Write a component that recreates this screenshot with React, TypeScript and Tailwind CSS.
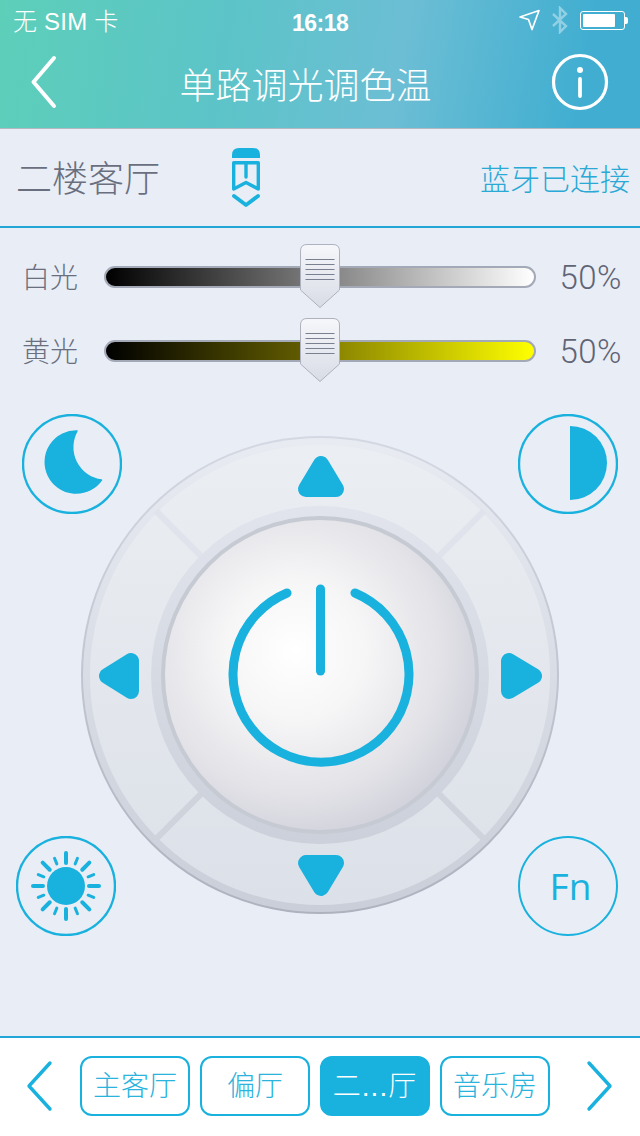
const BLUE = '#19b1de';

function StatusBar() {
  return (
    <div className="relative flex h-10 items-center pl-[13px] pr-[12px] text-[24px] text-white">
      <span className="pt-[4px] font-light tracking-[0.2px]">无 SIM 卡</span>
      <span className="absolute left-[292px] top-[6px] text-[23px] font-bold tracking-[-0.5px]">16:18</span>
      <div className="ml-auto flex items-center">
        <svg width="22" height="22" viewBox="0 0 22 22" fill="none" stroke="white" strokeWidth="1.7" strokeLinejoin="round">
          <path d="M1 8 L20 1.5 L13 20.5 L9.5 10.5 Z" />
        </svg>
        <svg className="ml-[11px] opacity-40" width="16" height="28" viewBox="0 0 16 28" fill="none" stroke="white" strokeWidth="2.4">
          <path d="M1 8 L14 20 L8 26 V2 L14 8 L1 20" />
        </svg>
        <div className="ml-[12px] flex items-center">
          <div className="h-[19px] w-[45px] rounded-[3px] border border-white p-[2px]">
            <div className="h-full w-[32px] rounded-[1px] bg-white" />
          </div>
          <div className="h-[7px] w-[3px] rounded-r-[2px] bg-white" />
        </div>
      </div>
    </div>
  );
}

function Header() {
  return (
    <header className="h-[129px] shrink-0 border-b border-[#b4b8c0] bg-[linear-gradient(100deg,#5dcfb9_0%,#5cc4c8_35%,#6cbed4_62%,#41aed1_90%)]">
      <StatusBar />
      <div className="relative flex h-[88px] items-center justify-center">
        <svg className="absolute left-[28px] top-[14px]" width="32" height="56" viewBox="0 0 32 56" fill="none" stroke="white" strokeWidth="4" strokeLinecap="round" strokeLinejoin="round">
          <path d="M26 4 L5.5 28 L26 52" />
        </svg>
        <h1 className="ml-[-29px] pt-[6px] text-[36px] font-light leading-none text-white">单路调光调色温</h1>
        <svg className="absolute left-[550px] top-[12px]" width="60" height="60" viewBox="0 0 60 60" fill="none" stroke="white">
          <circle cx="30" cy="30" r="26.5" strokeWidth="3.2" />
          <circle cx="30" cy="18" r="3" fill="white" stroke="none" />
          <path d="M30 27 V44" strokeWidth="3.8" strokeLinecap="round" />
        </svg>
      </div>
    </header>
  );
}

function RoomRow() {
  return (
    <div className="flex h-[99px] shrink-0 items-center border-b-2 border-[#22a6d8] pl-[16px] pr-[10px]">
      <span className="pt-[4px] text-[36px] font-light leading-none text-[#6a6f80]">二楼客厅</span>
      <svg className="ml-[72px]" width="28" height="60" viewBox="0 0 28 60" fill="none" stroke={BLUE} strokeWidth="3.4">
        <path d="M0 10 V7 Q0 0 7 0 H21 Q28 0 28 7 V10 Z" fill={BLUE} stroke="none" />
        <path d="M1.7 14.7 H26.3 V41 L14 34.5 L1.7 41 Z" strokeLinejoin="round" />
        <path d="M14 15 V29" strokeLinecap="round" />
        <path d="M2 48 L14 57 L26 48" strokeLinecap="round" strokeLinejoin="round" strokeWidth="3.8" />
      </svg>
      <span className="ml-auto pt-[4px] text-[30px] font-light leading-none text-[#2aa9d6]">蓝牙已连接</span>
    </div>
  );
}

function Thumb() {
  return (
    <svg className="absolute left-[194px] top-[-24px]" width="40" height="64" viewBox="0 0 40 64">
      <defs>
        <linearGradient id="thumbFill" x1="0" y1="0" x2="0" y2="1">
          <stop offset="0" stopColor="#f6f7fa" />
          <stop offset="1" stopColor="#d8dce6" />
        </linearGradient>
      </defs>
      <path d="M0.5 7 Q0.5 0.5 7 0.5 H33 Q39.5 0.5 39.5 7 V46 L20 63.5 L0.5 46 Z" fill="url(#thumbFill)" stroke="#aeb2be" />
      <path d="M5.5 15.5 H34.5 M5.5 20.5 H34.5 M5.5 25.5 H34.5 M5.5 30.5 H34.5 M5.5 35.5 H34.5" stroke="#7b8090" strokeWidth="1" />
    </svg>
  );
}

function SliderRow({ label, track }: { label: string; track: string }) {
  return (
    <div className="flex h-[74px] items-center">
      <span className="w-[104px] shrink-0 pl-[22px] pt-[4px] text-[28px] font-light leading-none whitespace-nowrap text-[#6a6f80]">{label}</span>
      <div className={`relative h-[22px] w-[432px] shrink-0 rounded-full border-[2px] border-[#a3a9b7] ${track}`}>
        <Thumb />
      </div>
      <span className="ml-auto pr-[18px] font-['Roboto'] text-[33px] font-light leading-none tracking-[0.5px] text-[#5f6475]">50%</span>
    </div>
  );
}

const DIAGONALS = [45, 135, 225, 315];

function Dial() {
  const c = 240;
  return (
    <svg width="480" height="480" viewBox="0 0 480 480" className="mx-auto mt-[47px] block">
      <defs>
        <linearGradient id="rimEdge" x1="0" y1="0" x2="0" y2="1">
          <stop offset="0" stopColor="#d4d8e2" />
          <stop offset="1" stopColor="#aeb2be" />
        </linearGradient>
        <linearGradient id="rim" x1="0" y1="0" x2="0" y2="1">
          <stop offset="0" stopColor="#e8ebf2" />
          <stop offset="1" stopColor="#c9ced8" />
        </linearGradient>
        <linearGradient id="face" x1="0" y1="0" x2="0" y2="1">
          <stop offset="0" stopColor="#ebeef2" />
          <stop offset="1" stopColor="#dce0e8" />
        </linearGradient>
        <linearGradient id="hub" x1="0" y1="0" x2="0" y2="1">
          <stop offset="0" stopColor="#e1e4ec" />
          <stop offset="1" stopColor="#cbd0da" />
        </linearGradient>
        <radialGradient id="ball" cx="0.42" cy="0.42" r="0.64">
          <stop offset="0" stopColor="#ffffff" />
          <stop offset="0.35" stopColor="#f6f6f7" />
          <stop offset="0.72" stopColor="#e3e3e8" />
          <stop offset="1" stopColor="#cfcfda" />
        </radialGradient>
      </defs>
      <circle cx={c} cy={c} r="239" fill="url(#rimEdge)" />
      <circle cx={c} cy={c} r="237" fill="url(#rim)" />
      <circle cx={c} cy={c} r="230" fill="url(#face)" />
      {DIAGONALS.map((deg) => {
        const a = (deg * Math.PI) / 180;
        return (
          <line
            key={deg}
            x1={c + 165 * Math.cos(a)}
            y1={c + 165 * Math.sin(a)}
            x2={c + 232 * Math.cos(a)}
            y2={c + 232 * Math.sin(a)}
            stroke={deg < 180 ? '#ced3dc' : '#e0e3eb'}
            strokeWidth="6"
          />
        );
      })}
      <circle cx={c} cy={c} r="169" fill="url(#hub)" />
      <circle cx={c} cy={c} r="159" fill="#c6cad3" />
      <circle cx={c} cy={c} r="155" fill="url(#ball)" />
      <g fill={BLUE} stroke={BLUE} strokeWidth="16" strokeLinejoin="round">
        <path d="M241 29 L226 54 H256 Z" />
        <path d="M241 453 L226 428 H256 Z" />
        <path d="M27 241 L51 226 V256 Z" />
        <path d="M454 241 L429 226 V256 Z" />
      </g>
      <g fill="none" stroke={BLUE} strokeWidth="9" strokeLinecap="round">
        <path d="M207 158 A88 88 0 1 0 275 158" />
        <path d="M240.5 154 V236" />
      </g>
    </svg>
  );
}

const RAYS = Array.from({ length: 16 }, (_, i) => i * 22.5);

function SunIcon() {
  return (
    <svg width="100" height="100" viewBox="0 0 100 100" fill="none" stroke={BLUE}>
      <circle cx="50" cy="50" r="49" strokeWidth="2.4" />
      <circle cx="50" cy="50" r="19" fill={BLUE} stroke="none" />
      {RAYS.map((deg, i) => {
        const a = (deg * Math.PI) / 180;
        const long = i % 2 === 0;
        const r1 = long ? 23 : 24;
        const r2 = long ? 33 : 30;
        return (
          <line
            key={deg}
            x1={50 + r1 * Math.cos(a)}
            y1={50 + r1 * Math.sin(a)}
            x2={50 + r2 * Math.cos(a)}
            y2={50 + r2 * Math.sin(a)}
            strokeWidth={long ? 4 : 3}
            strokeLinecap="round"
          />
        );
      })}
    </svg>
  );
}

function Controls() {
  return (
    <main className="relative flex-1 pt-[12px]">
      <SliderRow label="白光" track="bg-[linear-gradient(90deg,#000000,#737373_45%,#8a8a8a_55%,#ffffff)]" />
      <SliderRow label="黄光" track="bg-[linear-gradient(90deg,#000000,#5f5a00_45%,#8d8800_55%,#ffff00)]" />
      <Dial />

      <svg className="absolute left-[22px] top-[186px]" width="100" height="100" viewBox="0 0 100 100" fill="none" stroke={BLUE}>
        <circle cx="50" cy="50" r="49" strokeWidth="2.4" />
        <path d="M55 17 A31 31 0 1 0 79.5 66 A33 33 0 0 1 55 17 Z" fill={BLUE} strokeWidth="1.5" strokeLinejoin="round" />
      </svg>
      <svg className="absolute left-[518px] top-[186px]" width="100" height="100" viewBox="0 0 100 100" fill="none" stroke={BLUE}>
        <circle cx="50" cy="50" r="49" strokeWidth="2.4" />
        <path d="M52 12 A37 37 0 0 1 52 86 Z" fill={BLUE} stroke="none" />
      </svg>
      <div className="absolute left-[16px] top-[608px]">
        <SunIcon />
      </div>
      <div className="absolute left-[518px] top-[608px] flex h-[100px] w-[100px] items-center justify-center rounded-full border-[2.4px] border-[#19b1de] pl-[5px] font-['Open_Sans'] text-[37px] text-[#19b1de]">
        Fn
      </div>
    </main>
  );
}

const ROOMS = [
  { name: '主客厅', active: false },
  { name: '偏厅', active: false },
  { name: '二...厅', active: true },
  { name: '音乐房', active: false },
];

function Footer() {
  return (
    <footer className="flex h-[100px] shrink-0 items-start border-t-2 border-[#22a6d8] bg-white pt-[18px]">
      <svg className="ml-[23px] mt-[4px]" width="32" height="52" viewBox="0 0 32 52" fill="none" stroke={BLUE} strokeWidth="3.4" strokeLinecap="round" strokeLinejoin="round">
        <path d="M27 3 L6 26 L27 49" />
      </svg>
      <div className="ml-[25px] flex gap-[10px]">
        {ROOMS.map((room) => (
          <button
            key={room.name}
            className={
              room.active
                ? 'h-[60px] w-[110px] rounded-[12px] border-2 border-[#19b1de] bg-[#19b1de] pt-[2px] text-[28px] font-light leading-none tracking-[1px] text-white'
                : 'h-[60px] w-[110px] rounded-[12px] border-2 border-[#19b1de] bg-white pt-[2px] text-[28px] font-light leading-none text-[#2ab3dd]'
            }
          >
            {room.name}
          </button>
        ))}
      </div>
      <svg className="ml-[34px] mt-[4px]" width="32" height="52" viewBox="0 0 32 52" fill="none" stroke={BLUE} strokeWidth="3.4" strokeLinecap="round" strokeLinejoin="round">
        <path d="M5 3 L26 26 L5 49" />
      </svg>
    </footer>
  );
}

export default function App() {
  return (
    <div className="flex h-[1136px] w-[640px] flex-col overflow-hidden bg-[#e9edf5] font-['Liberation_Sans','Noto_Sans_CJK_SC',sans-serif]">
      <Header />
      <RoomRow />
      <Controls />
      <Footer />
    </div>
  );
}
